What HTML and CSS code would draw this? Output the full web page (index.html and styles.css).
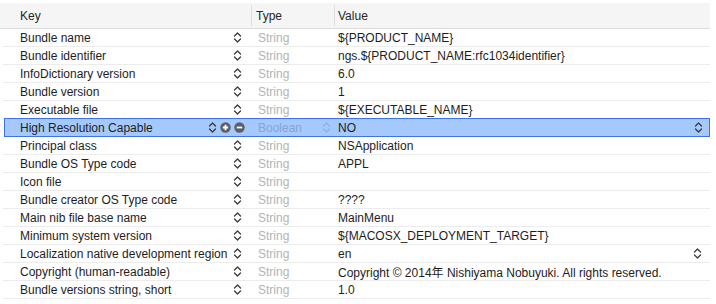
FILE: index.html
```html
<!DOCTYPE html>
<html>
<head>
<meta charset="utf-8">
<link rel="stylesheet" href="styles.css">
</head>
<body>
<div class="plist">
  <div class="header">
    <div class="hcell hkey">Key</div>
    <div class="hcell htype">Type</div>
    <div class="hcell hvalue">Value</div>
  </div>
  <div class="rows">
    <div class="row"><div class="key"><span>Bundle name</span><svg class="chev" viewBox="0 0 9 13"><path d="M1.5 5L4.5 2L7.5 5M1.5 8L4.5 11L7.5 8"/></svg></div><div class="type">String</div><div class="value">${PRODUCT_NAME}</div></div>
    <div class="row"><div class="key"><span>Bundle identifier</span><svg class="chev" viewBox="0 0 9 13"><path d="M1.5 5L4.5 2L7.5 5M1.5 8L4.5 11L7.5 8"/></svg></div><div class="type">String</div><div class="value">ngs.${PRODUCT_NAME:rfc1034identifier}</div></div>
    <div class="row"><div class="key"><span>InfoDictionary version</span><svg class="chev" viewBox="0 0 9 13"><path d="M1.5 5L4.5 2L7.5 5M1.5 8L4.5 11L7.5 8"/></svg></div><div class="type">String</div><div class="value">6.0</div></div>
    <div class="row"><div class="key"><span>Bundle version</span><svg class="chev" viewBox="0 0 9 13"><path d="M1.5 5L4.5 2L7.5 5M1.5 8L4.5 11L7.5 8"/></svg></div><div class="type">String</div><div class="value">1</div></div>
    <div class="row"><div class="key"><span>Executable file</span><svg class="chev" viewBox="0 0 9 13"><path d="M1.5 5L4.5 2L7.5 5M1.5 8L4.5 11L7.5 8"/></svg></div><div class="type">String</div><div class="value">${EXECUTABLE_NAME}</div></div>
    <div class="row selected"><div class="key"><span>High Resolution Capable</span><span class="tools"><svg class="chev" viewBox="0 0 9 13"><path d="M1.5 5L4.5 2L7.5 5M1.5 8L4.5 11L7.5 8"/></svg><svg class="circ" viewBox="0 0 11 11"><circle cx="5.5" cy="5.5" r="5.2"/><path d="M2.8 5.5H8.2M5.5 2.8V8.2"/></svg><svg class="circ" viewBox="0 0 11 11"><circle cx="5.5" cy="5.5" r="5.2"/><path d="M2.8 5.5H8.2"/></svg></span></div><div class="type typesel"><span>Boolean</span><svg class="chev light" viewBox="0 0 9 13"><path d="M1.5 5L4.5 2L7.5 5M1.5 8L4.5 11L7.5 8"/></svg></div><div class="value"><span>NO</span><svg class="chev" viewBox="0 0 9 13"><path d="M1.5 5L4.5 2L7.5 5M1.5 8L4.5 11L7.5 8"/></svg></div></div>
    <div class="row"><div class="key"><span>Principal class</span><svg class="chev" viewBox="0 0 9 13"><path d="M1.5 5L4.5 2L7.5 5M1.5 8L4.5 11L7.5 8"/></svg></div><div class="type">String</div><div class="value">NSApplication</div></div>
    <div class="row"><div class="key"><span>Bundle OS Type code</span><svg class="chev" viewBox="0 0 9 13"><path d="M1.5 5L4.5 2L7.5 5M1.5 8L4.5 11L7.5 8"/></svg></div><div class="type">String</div><div class="value">APPL</div></div>
    <div class="row"><div class="key"><span>Icon file</span><svg class="chev" viewBox="0 0 9 13"><path d="M1.5 5L4.5 2L7.5 5M1.5 8L4.5 11L7.5 8"/></svg></div><div class="type">String</div><div class="value"></div></div>
    <div class="row"><div class="key"><span>Bundle creator OS Type code</span><svg class="chev" viewBox="0 0 9 13"><path d="M1.5 5L4.5 2L7.5 5M1.5 8L4.5 11L7.5 8"/></svg></div><div class="type">String</div><div class="value">????</div></div>
    <div class="row"><div class="key"><span>Main nib file base name</span><svg class="chev" viewBox="0 0 9 13"><path d="M1.5 5L4.5 2L7.5 5M1.5 8L4.5 11L7.5 8"/></svg></div><div class="type">String</div><div class="value">MainMenu</div></div>
    <div class="row"><div class="key"><span>Minimum system version</span><svg class="chev" viewBox="0 0 9 13"><path d="M1.5 5L4.5 2L7.5 5M1.5 8L4.5 11L7.5 8"/></svg></div><div class="type">String</div><div class="value">${MACOSX_DEPLOYMENT_TARGET}</div></div>
    <div class="row"><div class="key"><span>Localization native development region</span><svg class="chev" viewBox="0 0 9 13"><path d="M1.5 5L4.5 2L7.5 5M1.5 8L4.5 11L7.5 8"/></svg></div><div class="type">String</div><div class="value"><span>en</span><svg class="chev" viewBox="0 0 9 13"><path d="M1.5 5L4.5 2L7.5 5M1.5 8L4.5 11L7.5 8"/></svg></div></div>
    <div class="row"><div class="key"><span>Copyright (human-readable)</span><svg class="chev" viewBox="0 0 9 13"><path d="M1.5 5L4.5 2L7.5 5M1.5 8L4.5 11L7.5 8"/></svg></div><div class="type">String</div><div class="value">Copyright © 2014年 Nishiyama Nobuyuki. All rights reserved.</div></div>
    <div class="row"><div class="key"><span>Bundle versions string, short</span><svg class="chev" viewBox="0 0 9 13"><path d="M1.5 5L4.5 2L7.5 5M1.5 8L4.5 11L7.5 8"/></svg></div><div class="type">String</div><div class="value">1.0</div></div>
  </div>
</div>
</body>
</html>
```

FILE: styles.css
```css
html, body {
  margin: 0;
  padding: 0;
  background: #ffffff;
}
body {
  font-family: "Liberation Sans", "Noto Sans CJK JP", sans-serif;
  font-size: 12px;
  color: #1d1d1d;
}
.plist {
  width: 710px;
  padding-top: 3px;
}
.header {
  display: grid;
  grid-template-columns: 251px 83px 1fr;
  height: 25px;
  background: #f5f5f5;
  border-bottom: 1px solid #dcdcdc;
}
.hcell {
  display: flex;
  align-items: center;
  color: #262626;
}
.hkey { padding-left: 20px; }
.htype {
  padding-left: 4px;
  border-left: 1px solid #dedede;
  margin: 2px 0;
}
.hvalue {
  padding-left: 3px;
  border-left: 1px solid #dedede;
  margin: 2px 0;
}
.rows {
  margin-left: 3px;
}
.row {
  display: grid;
  grid-template-columns: 248px 83px 1fr;
  height: 17px;
  border-bottom: 1px solid #ececec;
  align-items: center;
}
.row > div {
  display: flex;
  align-items: center;
  height: 17px;
  white-space: nowrap;
}
.key {
  justify-content: space-between;
  padding-left: 17px;
  padding-right: 9px;
}
.type {
  padding-left: 7px;
  color: #b4b4b4;
}
.value {
  padding-left: 4px;
  padding-right: 8px;
  justify-content: space-between;
}
.chev {
  width: 9px;
  height: 13px;
  flex: none;
}
.chev path {
  fill: none;
  stroke: #3a3a3a;
  stroke-width: 1.3;
  stroke-linecap: round;
  stroke-linejoin: round;
}
.chev.light path {
  stroke: #8fb0e0;
}
.selected {
  grid-template-columns: 246px 83px 1fr;
  background: #a6c9fb;
  border: 1px solid #3e72e6;
  margin-top: -1px;
  margin-left: 1px;
}
.selected .key {
  padding-left: 15px;
  padding-right: 6px;
}
.selected .value {
  padding-right: 6px;
}
.tools {
  display: flex;
  align-items: center;
  gap: 3px;
}
.circ {
  width: 11px;
  height: 11px;
}
.circ circle {
  fill: #5c5f66;
}
.circ path {
  stroke: #ffffff;
  stroke-width: 1.8;
}
.typesel {
  justify-content: space-between;
  color: #86a3d3;
  padding-right: 3px;
}
```
